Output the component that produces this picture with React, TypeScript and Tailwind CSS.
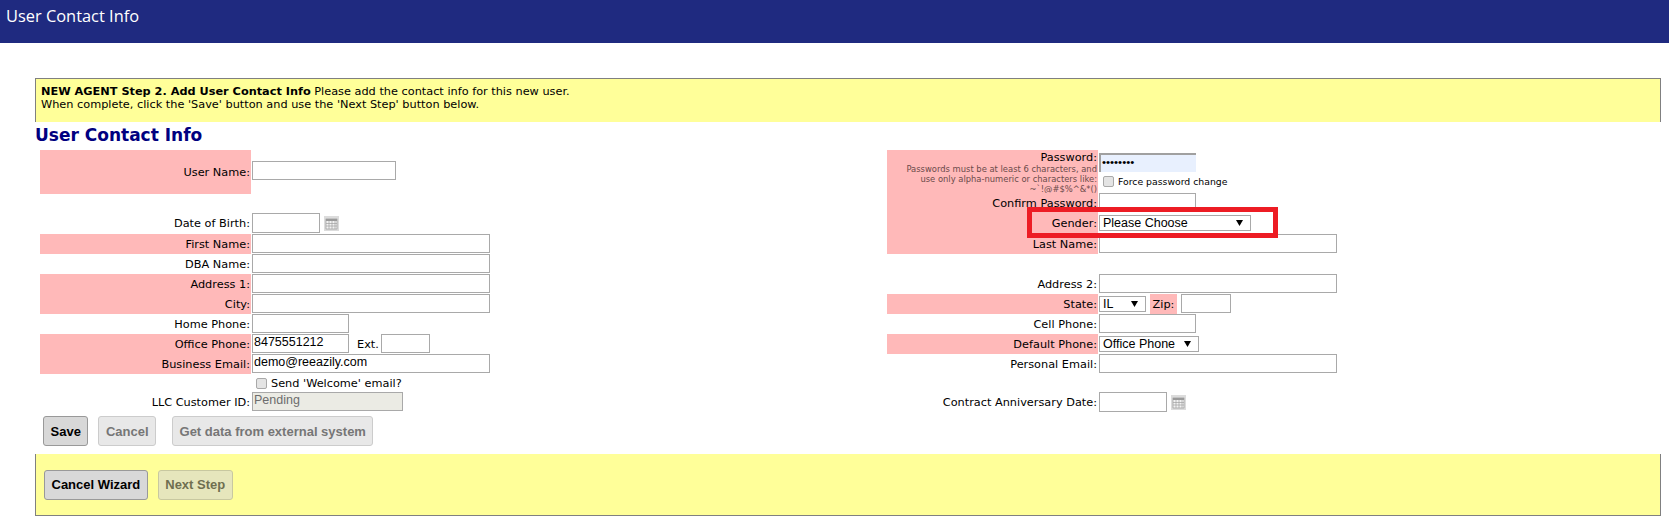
import type { ReactNode } from 'react';

const fieldFont = 'text-[12.5px] leading-[15px] font-["Liberation_Sans",sans-serif]';
const pink = 'bg-[#ffb9b9]';

function CalendarIcon() {
    return (
        <svg width="15" height="15" viewBox="0 0 15 15" className="ml-[4px] mt-[3px]">
            <rect x="0" y="0" width="15" height="15" fill="#dcdcdc" />
            <rect x="2" y="3" width="11" height="10" fill="#f2f2f2" stroke="#8c8c8c" strokeWidth="0.6" />
            <rect x="2" y="3" width="11" height="2" fill="#9a9a9a" />
            <path d="M5 5v8M8 5v8M11 5v8M2 7.5h11M2 10h11" stroke="#a0a0a0" strokeWidth="0.7" fill="none" />
        </svg>
    );
}

function TextBox({ width, value, tall, className }: { width: number; value?: string; tall?: boolean; className?: string }) {
    return (
        <div
            className={`block ${tall ? 'h-[20px]' : 'h-[19px]'} border border-[#a9a9a9] pl-[1px] ${fieldFont} ${className ?? 'bg-white text-black'}`}
            style={{ width }}
        >
            {value}
        </div>
    );
}

function SelectBox({ width, value }: { width: number; value: string }) {
    return (
        <div
            className={`mt-[2px] flex h-[16px] items-center justify-between whitespace-nowrap border border-[#a9a9a9] bg-white pl-[3px] pr-[7px] text-black ${fieldFont}`}
            style={{ width }}
        >
            <span>{value}</span>
            <svg width="7" height="6" viewBox="0 0 7 6">
                <path d="M0 0h7L3.5 6z" fill="#000" />
            </svg>
        </div>
    );
}

function CheckBox() {
    return <span className="mr-[4px] inline-block h-[11px] w-[11px] rounded-[2px] border border-[#a9a9a9] bg-[#e4e4e4]" />;
}

function Label({ children, shaded }: { children?: ReactNode; shaded?: boolean }) {
    return (
        <div className={`relative flex items-center justify-end pr-[1px] text-right ${shaded ? pink : ''}`}>
            {children}
        </div>
    );
}

function Row({
    left,
    leftShaded,
    leftField,
    right,
    rightShaded,
    rightField,
    h,
}: {
    left?: ReactNode;
    leftShaded?: boolean;
    leftField?: ReactNode;
    right?: ReactNode;
    rightShaded?: boolean;
    rightField?: ReactNode;
    h: string;
}) {
    return (
        <div className={`grid grid-cols-[211px_636px_211px_1fr] ${h}`}>
            <Label shaded={leftShaded}>{left}</Label>
            <div className="flex items-start pl-[1px]">{leftField}</div>
            <Label shaded={rightShaded}>{right}</Label>
            <div className="flex items-start pl-[1px]">{rightField}</div>
        </div>
    );
}

function WizardButton({ children, variant }: { children: ReactNode; variant: 'main' | 'off' | 'olive' }) {
    const styles = {
        main: 'bg-[#d8d8d8] border-[#999999] text-black',
        off: 'bg-[#e8e8e8] border-[#cccccc] text-[#767676]',
        olive: 'bg-[#e6e6bc] border-[#c8c8a0] text-[#6f6f50]',
    };
    return (
        <button
            className={`h-[30px] rounded-[3px] border px-[6.5px] text-[13px] font-bold font-["Liberation_Sans",sans-serif] ${styles[variant]}`}
        >
            {children}
        </button>
    );
}

export default function App() {
    return (
        <div className="min-h-[519px] w-[1669px] bg-white font-['DejaVu_Sans',sans-serif] text-[11.3px] leading-[13px] text-black">
            <div className="h-[43px] bg-[#1f2a80] pl-[6px] pt-[7px] font-['Open_Sans',sans-serif] text-[16.4px] leading-[18px] text-white">
                User Contact Info
            </div>

            <div className="ml-[35px] mr-[8px] pt-[35px]">
                <div className="h-[44px] border-l border-t border-r border-[#808080] bg-[#ffff99] pl-[5px] pt-[6px]">
                    <div>
                        <b>NEW AGENT Step 2. Add User Contact Info</b> Please add the contact info for this new user.
                    </div>
                    <div>When complete, click the 'Save' button and use the 'Next Step' button below.</div>
                </div>

                <h2 className="h-[28px] pt-[3px] text-[17px] font-bold leading-[20px] text-[#000080]">User Contact Info</h2>

                <div className="ml-[5px]">
                    <Row
                        h="h-[43px]"
                        left="User Name:"
                        leftShaded
                        leftField={
                            <div className="mt-[11px]">
                                <TextBox width={144} />
                            </div>
                        }
                        right={
                            <div className="self-start">
                                <div className="pt-[1px]">Password:</div>
                                <div className="text-[8.4px] leading-[10px] text-[#6b4a4a]">
                                    Passwords must be at least 6 characters, and
                                    <br />
                                    use only alpha-numeric or characters like:
                                    <br />
                                    ~`!@#$%^&*()
                                </div>
                            </div>
                        }
                        rightShaded
                        rightField={
                            <div className="pt-[3px]">
                                <div className="h-[19px] w-[97px] border-l-2 border-t-2 border-[#a0a0a0] bg-[#e8f0fe] pl-[1px] font-['Liberation_Sans',sans-serif] text-[11.5px] leading-[14px]">
                                    ••••••••
                                </div>
                                <div className="flex items-center pl-[4px] pt-[3px] text-[9.3px]">
                                    <CheckBox />
                                    Force password change
                                </div>
                            </div>
                        }
                    />
                    <Row h="h-[20px]" right="Confirm Password:" rightShaded rightField={<TextBox width={97} />} />
                    <Row
                        h="h-[21px]"
                        left="Date of Birth:"
                        leftField={
                            <>
                                <TextBox width={68} tall />
                                <CalendarIcon />
                            </>
                        }
                        right={
                            <>
                                Gender:
                                <div className="absolute left-[140px] top-[-6px] z-10 h-[31px] w-[251px] border-[5px] border-[#ed1c24]" />
                            </>
                        }
                        rightShaded
                        rightField={<SelectBox width={152} value="Please Choose" />}
                    />
                    <Row
                        h="h-[20px]"
                        left="First Name:"
                        leftShaded
                        leftField={<TextBox width={238} />}
                        right="Last Name:"
                        rightShaded
                        rightField={<TextBox width={238} />}
                    />
                    <Row h="h-[20px]" left="DBA Name:" leftField={<TextBox width={238} />} />
                    <Row
                        h="h-[20px]"
                        left="Address 1:"
                        leftShaded
                        leftField={<TextBox width={238} />}
                        right="Address 2:"
                        rightField={<TextBox width={238} />}
                    />
                    <Row
                        h="h-[20px]"
                        left="City:"
                        leftShaded
                        leftField={<TextBox width={238} />}
                        right="State:"
                        rightShaded
                        rightField={
                            <>
                                <SelectBox width={47} value="IL" />
                                <div className={`ml-[4px] mr-[4px] flex h-full w-[27px] items-center justify-center ${pink}`}>Zip:</div>
                                <TextBox width={50} />
                            </>
                        }
                    />
                    <Row
                        h="h-[20px]"
                        left="Home Phone:"
                        leftField={<TextBox width={97} />}
                        right="Cell Phone:"
                        rightField={<TextBox width={97} />}
                    />
                    <Row
                        h="h-[20px]"
                        left="Office Phone:"
                        leftShaded
                        leftField={
                            <>
                                <TextBox width={97} value="8475551212" />
                                <span className="ml-[8px] mr-[2px] self-center">Ext.</span>
                                <TextBox width={49} />
                            </>
                        }
                        right="Default Phone:"
                        rightShaded
                        rightField={<SelectBox width={100} value="Office Phone" />}
                    />
                    <Row
                        h="h-[20px]"
                        left="Business Email:"
                        leftShaded
                        leftField={<TextBox width={238} value="demo@reeazily.com" />}
                        right="Personal Email:"
                        rightField={<TextBox width={238} />}
                    />
                    <Row
                        h="h-[18px]"
                        leftField={
                            <div className="flex h-full items-center pl-[4px]">
                                <CheckBox />
                                Send 'Welcome' email?
                            </div>
                        }
                    />
                    <Row
                        h="h-[20px]"
                        left="LLC Customer ID:"
                        leftField={<TextBox width={151} value="Pending" className="bg-[#ebebe4] text-[#6d6d6d]" />}
                        right="Contract Anniversary Date:"
                        rightField={
                            <>
                                <TextBox width={68} tall />
                                <CalendarIcon />
                            </>
                        }
                    />
                </div>

                <div className="flex gap-[10px] pl-[8px] pt-[4px]">
                    <WizardButton variant="main">Save</WizardButton>
                    <WizardButton variant="off">Cancel</WizardButton>
                    <div className="ml-[6px]">
                        <WizardButton variant="off">Get data from external system</WizardButton>
                    </div>
                </div>

                <div className="mt-[8px] flex h-[62px] items-center gap-[10px] border-b border-l border-r border-[#808080] bg-[#ffff99] pl-[8px]">
                    <WizardButton variant="main">Cancel Wizard</WizardButton>
                    <WizardButton variant="olive">Next Step</WizardButton>
                </div>
            </div>
        </div>
    );
}
